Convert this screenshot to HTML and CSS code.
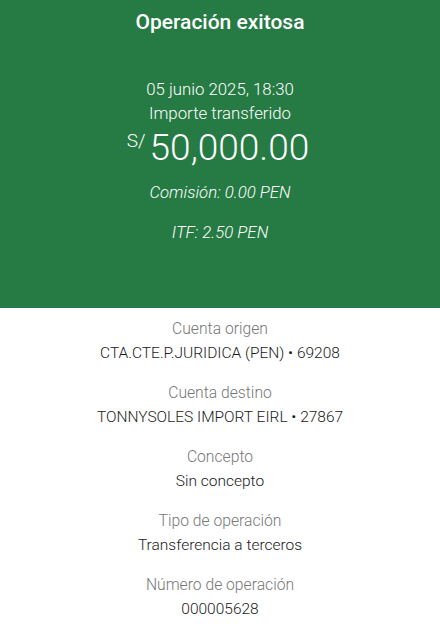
FILE: index.html
```html
<!DOCTYPE html>
<html lang="es">
<head>
  <meta charset="UTF-8">
  <meta name="viewport" content="width=device-width, initial-scale=1.0">
  <title>Operación exitosa</title>
  <link rel="stylesheet" href="styles.css">
</head>
<body>
  <header class="summary">
    <h1 class="title">Operación exitosa</h1>
    <p class="date">05 junio 2025, 18:30</p>
    <p class="caption">Importe transferido</p>
    <p class="amount"><span class="currency">S/</span>50,000.00</p>
    <p class="fee">Comisión: 0.00 PEN</p>
    <p class="fee">ITF: 2.50 PEN</p>
  </header>

  <main class="details">
    <div class="item">
      <span class="label">Cuenta origen</span>
      <span class="value">CTA.CTE.P.JURIDICA (PEN) • 69208</span>
    </div>
    <div class="item">
      <span class="label">Cuenta destino</span>
      <span class="value">TONNYSOLES IMPORT EIRL • 27867</span>
    </div>
    <div class="item">
      <span class="label">Concepto</span>
      <span class="value">Sin concepto</span>
    </div>
    <div class="item">
      <span class="label">Tipo de operación</span>
      <span class="value">Transferencia a terceros</span>
    </div>
    <div class="item">
      <span class="label">Número de operación</span>
      <span class="value">000005628</span>
    </div>
  </main>
</body>
</html>
```

FILE: styles.css
```css
body {
  margin: 0;
  font-family: Roboto, "Liberation Sans", sans-serif;
  font-weight: 300;
  text-align: center;
  background: #fff;
}

p {
  margin: 0;
}

.summary {
  background-color: #267a43;
  color: #fff;
  height: 308px;
  box-sizing: border-box;
  padding-top: 9px;
  display: flex;
  flex-direction: column;
  align-items: center;
}

.title {
  margin: 0;
  font-size: 21px;
  font-weight: 500;
  line-height: 26px;
}

.date {
  margin-top: 42px;
  font-size: 16.8px;
  line-height: 24px;
}

.caption {
  font-size: 16.8px;
  line-height: 24px;
}

.amount {
  font-size: 37px;
  line-height: 46px;
  margin-left: -4px;
}

.currency {
  font-size: 19px;
  line-height: 0;
  vertical-align: 13px;
  margin-right: 4px;
}

.fee {
  font-style: italic;
  font-size: 16.8px;
  line-height: 24px;
  margin-top: 9px;
}

.fee + .fee {
  margin-top: 16px;
}

.details {
  padding-top: 9px;
  display: flex;
  flex-direction: column;
  gap: 16px;
}

.item {
  display: flex;
  flex-direction: column;
}

.label {
  color: #777;
  font-size: 15.7px;
  line-height: 24px;
}

.value {
  color: #1a1a1a;
  font-size: 15.5px;
  line-height: 24px;
}
```
